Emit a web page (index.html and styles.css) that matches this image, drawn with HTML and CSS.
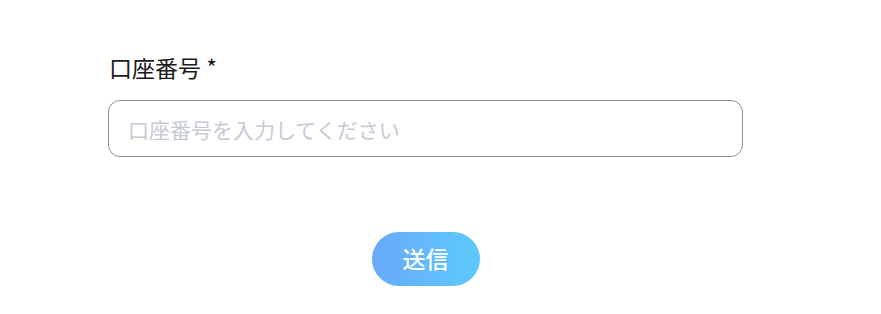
FILE: index.html
```html
<!DOCTYPE html>
<html>
  <head>
    <meta charset="UTF-8" />
    <title>口座番号</title>
    <link rel="stylesheet" href="styles.css">
  </head>
  <body>
    <form class="form">
      <div class="field">
        <label class="field-label" for="account">口座番号 *</label>
        <input
          type="text"
          id="account"
          class="field-input"
          placeholder="口座番号を入力してください"
        />
      </div>
      <div class="actions">
        <button type="submit" class="submit-btn">送信</button>
      </div>
    </form>
  </body>
</html>
```

FILE: styles.css
```css
* {
  margin: 0;
  padding: 0;
  box-sizing: border-box;
}

body {
  font-family: "Noto Sans CJK JP", "Noto Sans", sans-serif;
  background: #fff;
  color: #1a1a1a;
}

.form {
  width: 635px;
  margin-left: 108px;
  padding-top: 50px;
}

.field {
  display: flex;
  flex-direction: column;
  gap: 15px;
}

.field-label {
  font-size: 23px;
  line-height: 35px;
  padding-left: 1px;
}

.field-input {
  width: 100%;
  height: 57px;
  padding: 0 19px;
  border: 1px solid #8a8d9a;
  border-radius: 12px;
  font-family: inherit;
  font-size: 21px;
  color: #1a1a1a;
}

.field-input::placeholder {
  color: #c6cad6;
}

.field-input:focus {
  outline: none;
}

.actions {
  display: flex;
  justify-content: center;
  padding-top: 75px;
}

.submit-btn {
  width: 108px;
  height: 54px;
  padding-bottom: 3px;
  border: none;
  border-radius: 27px;
  background: linear-gradient(90deg, #68a9f9, #5dcafc);
  color: #fff;
  font-family: inherit;
  font-size: 23px;
  font-weight: 500;
  cursor: pointer;
}
```
